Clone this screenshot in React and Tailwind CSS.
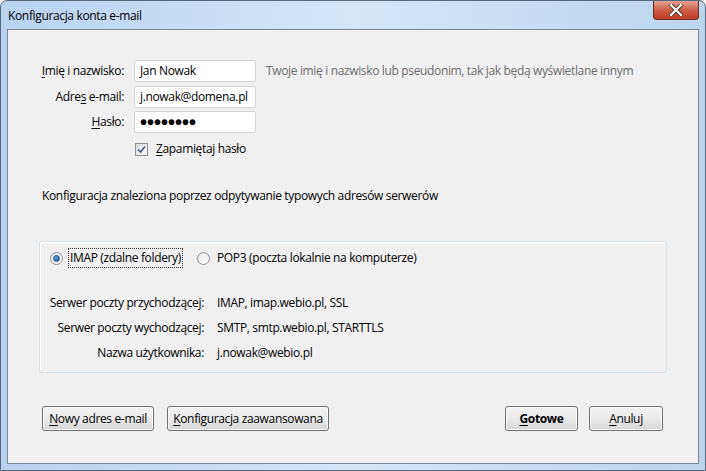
import { useState } from "react";

function Underlined({ text, at }) {
  return (
    <>
      {text.slice(0, at)}
      <span className="underline underline-offset-2">{text[at]}</span>
      {text.slice(at + 1)}
    </>
  );
}

function Field({ label, at, children }) {
  return (
    <div className="flex items-center h-[22px]">
      <label className="w-[117px] text-right pr-[1px] text-black">
        <Underlined text={label} at={at} />
      </label>
      <div className="ml-[9px] w-[122px] h-[22px] px-[5px] bg-white border border-[#d4d4d4] rounded-[2px] text-black flex items-center overflow-hidden whitespace-nowrap">
        {children}
      </div>
    </div>
  );
}

function Radio({ checked }) {
  return (
    <span className="w-[13px] h-[13px] rounded-full border border-[#8f8f8f] bg-gradient-to-br from-[#e6e6e6] to-[#ffffff] flex items-center justify-center">
      {checked && (
        <span className="w-[7px] h-[7px] rounded-full bg-gradient-to-br from-[#6bb0ec] to-[#1a5ea8] border border-[#1f4f83]" />
      )}
    </span>
  );
}

function Button({ label, at, bold, w }) {
  return (
    <button
      className={`${w} h-[25px] rounded-[3px] border border-[#707070] bg-gradient-to-b from-[#f2f2f2] via-[#ebebeb] to-[#d6d6d6] text-black shadow-[inset_0_0_0_1px_#fcfcfc] ${bold ? "font-bold" : ""}`}
    >
      <Underlined text={label} at={at} />
    </button>
  );
}

function ServerRow({ label, value }) {
  return (
    <div className="flex items-center h-[25px]">
      <span className="w-[164px] text-right text-black">{label}</span>
      <span className="ml-[13px] text-black">{value}</span>
    </div>
  );
}

export default function App() {
  const [remember, setRemember] = useState(true);

  return (
    <div className="w-[706px] h-[471px] font-['Open_Sans',sans-serif] text-[12px] tracking-[-0.35px] overflow-hidden">
      <div className="w-full h-full rounded-t-[7px] border border-[#56687c] bg-gradient-to-r from-[#b8d3f0] via-[#d5e6f8] to-[#bcd5ef] flex flex-col">
        <div className="h-[28px] flex items-start justify-between">
          <span className="pl-[7px] pt-[6px] text-[12px] text-black">Konfiguracja konta e-mail</span>
          <div className="mr-[6px] w-[46px] h-[19px] rounded-b-[4px] border border-t-0 border-[#6d2b22] bg-gradient-to-b from-[#e3a493] via-[#cf5d48] to-[#bf3b25] flex items-center justify-center">
            <svg width="14" height="12" viewBox="0 0 14 12">
              <path d="M2 1 L12 11 M12 1 L2 11" stroke="#4a1a12" strokeWidth="4" strokeLinecap="square" />
              <path d="M2 1 L12 11 M12 1 L2 11" stroke="#ffffff" strokeWidth="2.4" strokeLinecap="square" />
            </svg>
          </div>
        </div>

        <div className="mx-[6px] h-[435px] border border-[#7b8896] bg-[#f0f0f0] flex flex-col">
          <div className="pt-[30px] flex items-start">
            <div className="flex flex-col gap-[3.5px]">
              <Field label="Imię i nazwisko:" at={0}>Jan Nowak</Field>
              <Field label="Adres e-mail:" at={4}>j.nowak@domena.pl</Field>
              <Field label="Hasło:" at={0}>
                <span className="font-['Liberation_Sans',sans-serif] text-[20px] font-bold leading-none tracking-[0px] -mt-[1px]">
                  ••••••••
                </span>
              </Field>
            </div>
            <span className="ml-[10px] h-[22px] flex items-center text-[#6d6d6d]">
              Twoje imię i nazwisko lub pseudonim, tak jak będą wyświetlane innym
            </span>
          </div>

          <label
            className="mt-[8px] ml-[127px] flex items-center h-[16px] cursor-default"
            onClick={() => setRemember(!remember)}
          >
            <span className="w-[13px] h-[13px] border border-[#8e8f8f] bg-gradient-to-br from-[#dcdcdc] to-[#fbfbfb] flex items-center justify-center">
              {remember && (
                <svg width="9" height="9" viewBox="0 0 9 9">
                  <path d="M1 4.5 L3.5 7 L8 1.5" fill="none" stroke="#4a5f97" strokeWidth="1.6" />
                </svg>
              )}
            </span>
            <span className="ml-[8px] text-black">
              <Underlined text="Zapamiętaj hasło" at={0} />
            </span>
          </label>

          <div className="mt-[31px] ml-[34px] h-[16px] flex items-center text-black">
            Konfiguracja znaleziona poprzez odpytywanie typowych adresów serwerów
          </div>

          <div className="mt-[37px] ml-[31px] w-[628px] h-[132px] rounded-[3px] border border-[#d5dfe5] shadow-[inset_1px_1px_0_#ffffff] flex flex-col">
            <div className="mt-[7px] ml-[10px] flex items-center h-[18px]">
              <Radio checked />
              <span className="ml-[5px] px-[1px] border border-dotted border-[#333]">IMAP (zdalne foldery)</span>
              <span className="ml-[14px]">
                <Radio />
              </span>
              <span className="ml-[7px]">POP3 (poczta lokalnie na komputerze)</span>
            </div>
            <div className="mt-[23px] flex flex-col">
              <ServerRow label="Serwer poczty przychodzącej:" value="IMAP, imap.webio.pl, SSL" />
              <ServerRow label="Serwer poczty wychodzącej:" value="SMTP, smtp.webio.pl, STARTTLS" />
              <ServerRow label="Nazwa użytkownika:" value="j.nowak@webio.pl" />
            </div>
          </div>

          <div className="mt-[33px] flex items-center">
            <div className="ml-[34px] flex gap-[13px]">
              <Button label="Nowy adres e-mail" at={0} w="w-[112px]" />
              <Button label="Konfiguracja zaawansowana" at={0} w="w-[162px]" />
            </div>
            <div className="ml-auto mr-[35px] flex gap-[11px]">
              <Button label="Gotowe" at={0} bold w="w-[73px]" />
              <Button label="Anuluj" at={0} w="w-[74px]" />
            </div>
          </div>
        </div>
      </div>
    </div>
  );
}
